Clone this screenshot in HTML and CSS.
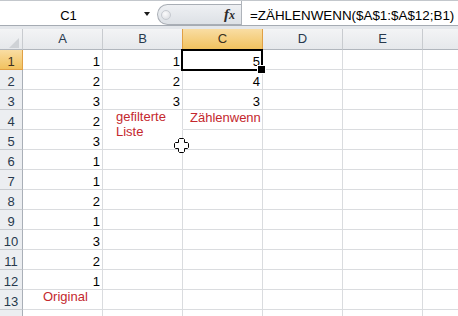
FILE: index.html
```html
<!DOCTYPE html>
<html lang="de">
<head>
    <meta charset="UTF-8">
    <title>ZÄHLENWENN</title>
    <link rel="stylesheet" href="styles.css">
</head>
<body>

    <!-- Formula bar -->
    <div class="formula-bar">
        <div class="name-box"><span class="name">C1</span><span class="drop"><span class="arrow"></span></span></div>
        <div class="fx-pill"><span class="knob"></span><span class="fx">f<span class="x">x</span></span></div>
        <div class="formula">=ZÄHLENWENN($A$1:$A$12;B1)</div>
    </div>
    <div class="gap"></div>

    <!-- Worksheet -->
    <div class="sheet">
        <div class="hd corner"></div><div class="hd">A</div><div class="hd pre-sel">B</div><div class="hd sel">C</div><div class="hd">D</div><div class="hd">E</div><div class="hd"></div>

        <div class="rh sel">1</div><div class="c n">1</div><div class="c n">1</div><div class="c n">5</div><div class="c"></div><div class="c"></div><div class="c"></div>
        <div class="rh">2</div><div class="c n">2</div><div class="c n">2</div><div class="c n">4</div><div class="c"></div><div class="c"></div><div class="c"></div>
        <div class="rh">3</div><div class="c n">3</div><div class="c n">3</div><div class="c n">3</div><div class="c"></div><div class="c"></div><div class="c"></div>
        <div class="rh">4</div><div class="c n">2</div><div class="c open"><div class="note note-b">gefilterte<br>Liste</div></div><div class="c"><div class="note note-c">Zählenwenn</div></div><div class="c"></div><div class="c"></div><div class="c"></div>
        <div class="rh">5</div><div class="c n">3</div><div class="c"></div><div class="c"></div><div class="c"></div><div class="c"></div><div class="c"></div>
        <div class="rh">6</div><div class="c n">1</div><div class="c"></div><div class="c"></div><div class="c"></div><div class="c"></div><div class="c"></div>
        <div class="rh">7</div><div class="c n">1</div><div class="c"></div><div class="c"></div><div class="c"></div><div class="c"></div><div class="c"></div>
        <div class="rh">8</div><div class="c n">2</div><div class="c"></div><div class="c"></div><div class="c"></div><div class="c"></div><div class="c"></div>
        <div class="rh">9</div><div class="c n">1</div><div class="c"></div><div class="c"></div><div class="c"></div><div class="c"></div><div class="c"></div>
        <div class="rh">10</div><div class="c n">3</div><div class="c"></div><div class="c"></div><div class="c"></div><div class="c"></div><div class="c"></div>
        <div class="rh">11</div><div class="c n">2</div><div class="c"></div><div class="c"></div><div class="c"></div><div class="c"></div><div class="c"></div>
        <div class="rh">12</div><div class="c n">1</div><div class="c"></div><div class="c"></div><div class="c"></div><div class="c"></div><div class="c"></div>
        <div class="rh">13</div><div class="c"><div class="note note-a">Original</div></div><div class="c"></div><div class="c"></div><div class="c"></div><div class="c"></div><div class="c"></div>
        <div class="rh"></div><div class="c"></div><div class="c"></div><div class="c"></div><div class="c"></div><div class="c"></div><div class="c"></div>

        <!-- active cell frame and mouse pointer -->
        <div class="selection"></div>
        <svg class="cursor" width="16" height="16" viewBox="0 0 16 16">
            <path d="M5.5 0.5 H9.5 L10.5 1.5 V4.5 H13.5 L14.5 5.5 V9.5 L13.5 10.5 H10.5 V13.5 L9.5 14.5 H5.5 L4.5 13.5 V10.5 H1.5 L0.5 9.5 V5.5 L1.5 4.5 H4.5 V1.5 Z" fill="#fff" stroke="#000" stroke-width="1"/>
        </svg>
    </div>

</body>
</html>
```

FILE: styles.css
```css
* { box-sizing: border-box; }
body {
    margin: 0;
    width: 458px;
    height: 316px;
    overflow: hidden;
    background: #fff;
    font-family: "Liberation Sans", Arial, sans-serif;
    font-size: 13px;
    color: #000;
}

/* Formula bar */
.formula-bar {
    display: flex;
    height: 26px;
    border-top: 1px solid #c3c7cc;
    border-bottom: 1px solid #a5abb3;
    background: #fff;
}
.name-box { width: 157px; display: flex; }
.name-box .name { flex: 1; text-align: center; padding-top: 4px; line-height: 21px; }
.name-box .drop { width: 20px; display: flex; align-items: center; justify-content: center; padding-top: 2px; }
.arrow {
    width: 0; height: 0;
    border-left: 3.5px solid transparent;
    border-right: 3.5px solid transparent;
    border-top: 4px solid #1b1b1b;
}
.fx-pill {
    width: 84px;
    height: 21px;
    margin-top: 3px;
    display: flex;
    align-items: center;
    background: linear-gradient(#eef0f3, #dde1e6);
    border: 1px solid #a9aeb5;
    border-right: none;
    border-radius: 11px 0 0 11px;
}
.knob {
    width: 10px; height: 10px;
    margin-left: 3px;
    border-radius: 50%;
    background: radial-gradient(circle at 40% 35%, #fbfbfc, #d6d9de);
    border: 1px solid #c6cad0;
}
.fx {
    margin-left: auto;
    margin-right: 6px;
    font-family: "Liberation Serif", serif;
    font-style: italic;
    font-weight: bold;
    font-size: 15px;
    color: #2b2b2b;
}
.fx .x { font-size: 12px; }
.formula {
    flex: 1;
    border-left: 1px solid #aeb3ba;
    padding-left: 8px;
    padding-top: 4px;
    line-height: 21px;
    font-size: 13.4px;
    white-space: nowrap;
}
.gap { height: 3px; background: #e4e7eb; }

/* Worksheet grid */
.sheet {
    position: relative;
    display: grid;
    grid-template-columns: 23px repeat(6, 80px);
    grid-template-rows: 21px;
    grid-auto-rows: 20px;
}
.hd {
    background: linear-gradient(#f3f4f5, #e6e8eb);
    border-right: 1px solid #c8cbcf;
    border-bottom: 1px solid #b1b6bd;
    text-align: center;
    line-height: 20px;
    color: #27394d;
}
.corner { display: flex; justify-content: flex-end; align-items: flex-end; padding: 0 3px 1px 0; }
.corner::after {
    content: "";
    border-left: 10px solid transparent;
    border-bottom: 10px solid #cfd2d6;
}
.rh {
    background: #eceef1;
    border-right: 1px solid #a9afb7;
    border-bottom: 1px solid #c8cbcf;
    text-align: center;
    padding-top: 2px;
    line-height: 19px;
    color: #27394d;
}
.hd.sel, .rh.sel {
    background: linear-gradient(#f9dda3, #f1c25f);
    border-color: #e0a045;
    color: #3a3020;
}
.hd.pre-sel { border-right-color: #e0a045; }
.c {
    border-right: 1px solid #dadcdf;
    border-bottom: 1px solid #dadcdf;
    padding-top: 2px;
    line-height: 19px;
    white-space: nowrap;
}
.c.n { text-align: right; padding-right: 2px; }
.c.open { border-bottom-color: transparent; }

/* red text boxes */
.note { color: #c4282e; line-height: 15px; }
.note-b { margin-top: -3px; padding-left: 13px; }
.note-c { margin-top: -2px; padding-left: 7px; }
.note-a { margin-top: -3px; padding-left: 20px; }

.selection {
    position: absolute;
    left: 181px;
    top: 20px;
    width: 82px;
    height: 22px;
    border: 2px solid #000;
}
.selection::after {
    content: "";
    position: absolute;
    right: -5px;
    bottom: -5px;
    width: 7px;
    height: 7px;
    background: #000;
    border: 1px solid #fff;
}
.cursor { position: absolute; left: 174px; top: 109px; }
```
